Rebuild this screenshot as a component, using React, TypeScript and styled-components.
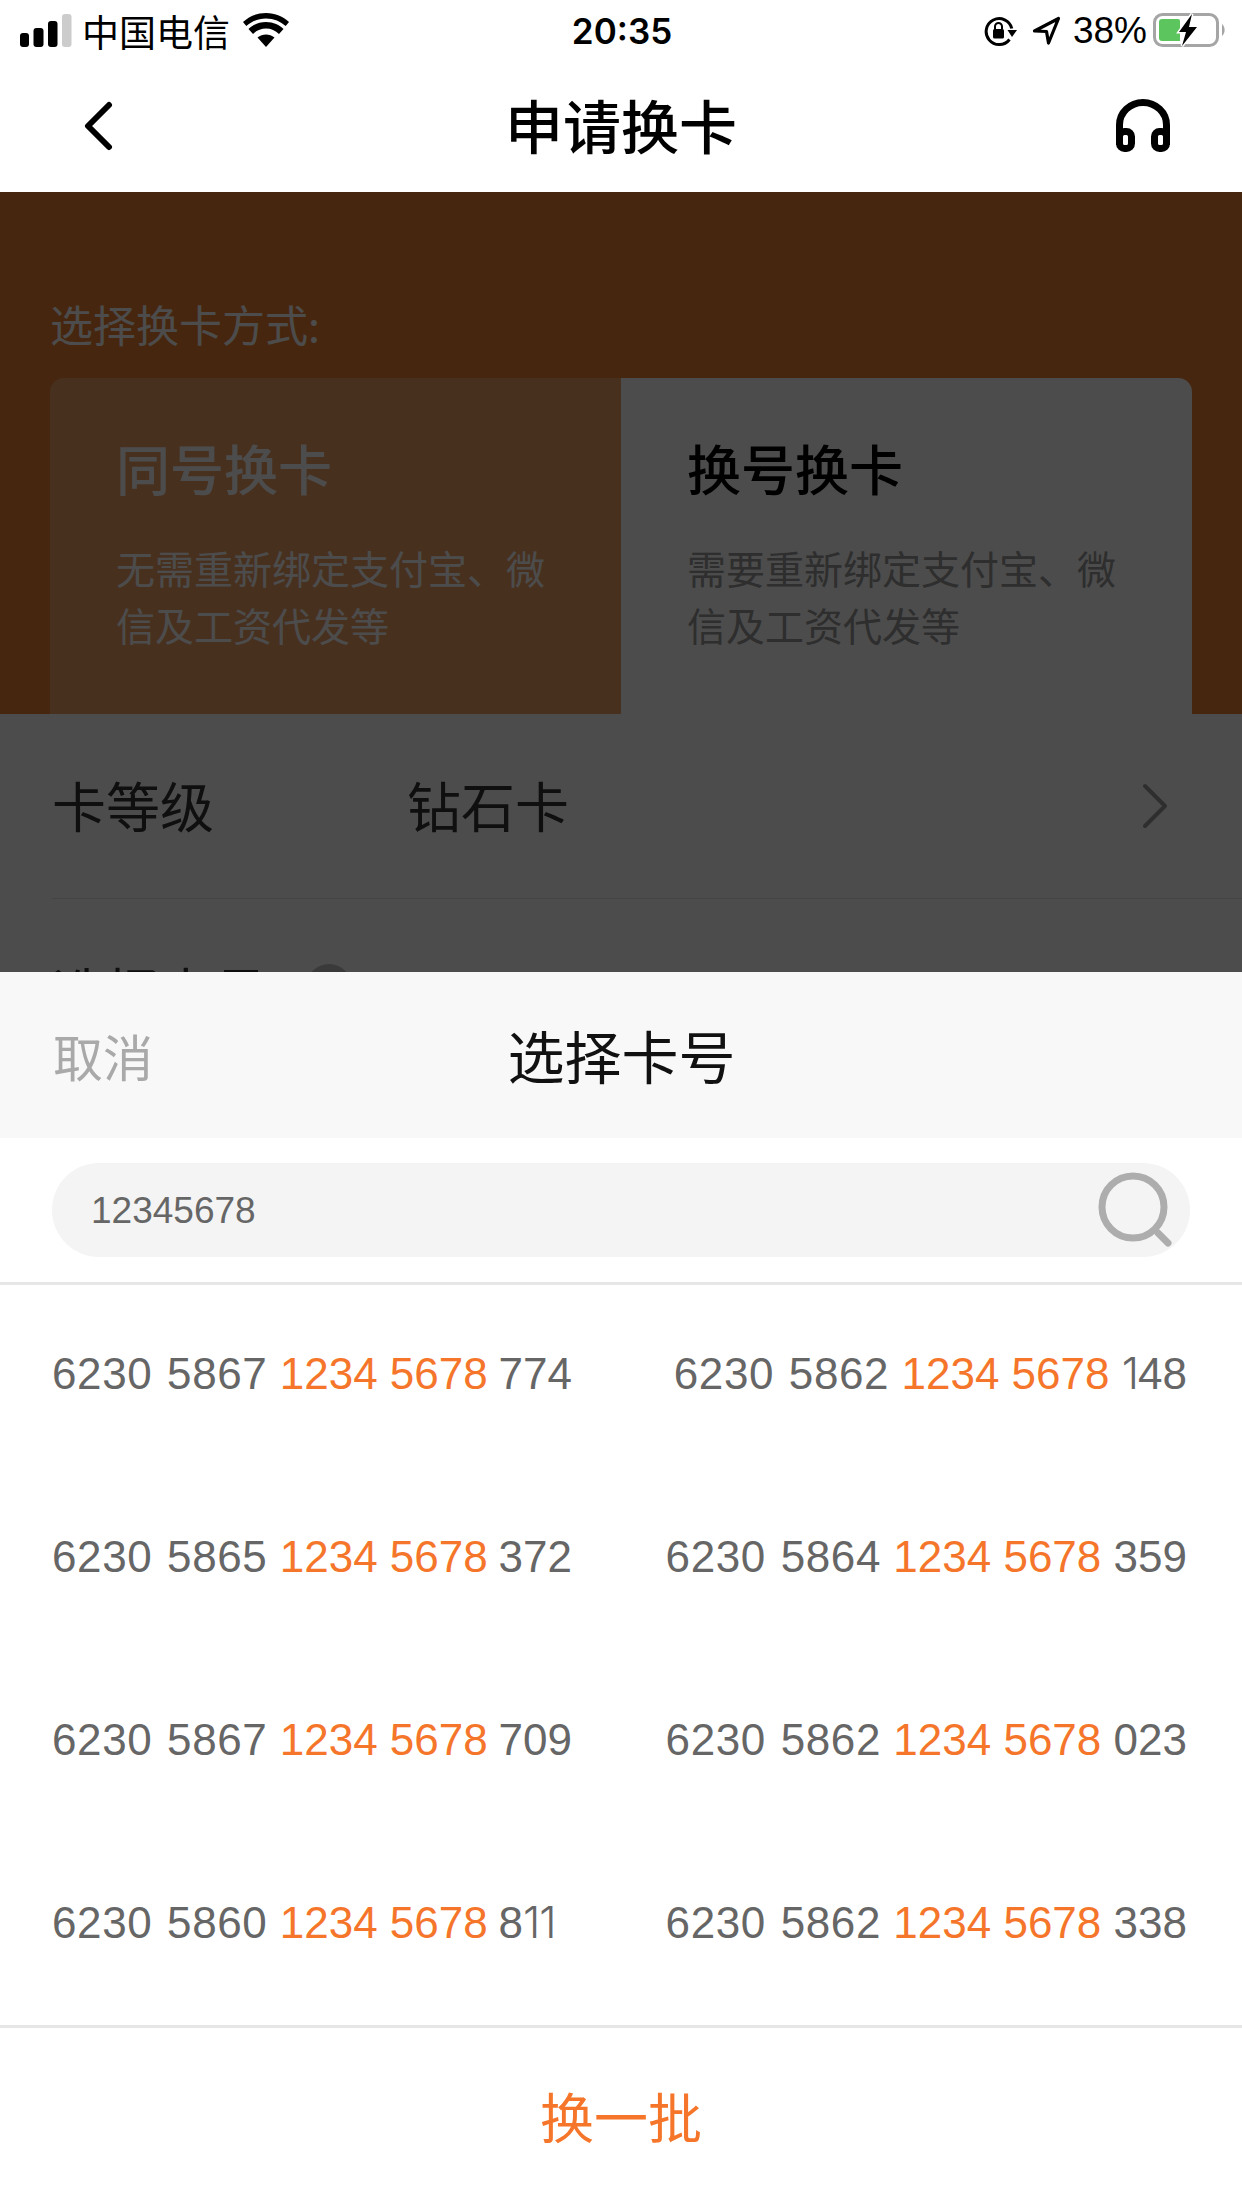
import React from "react";
import styled, { createGlobalStyle } from "styled-components";

const Global = createGlobalStyle`
  html, body { margin: 0; padding: 0; background: #fff; }
  body { font-family: "Liberation Sans", "Noto Sans CJK SC", sans-serif; }
  * { box-sizing: border-box; }
`;

const Page = styled.div`
  position: relative;
  width: 1242px;
  height: 2208px;
  overflow: hidden;
  display: flex;
  flex-direction: column;
  background: #fff;
`;

const StatusBar = styled.div`
  height: 60px;
  padding: 13px 16px 0 20px;
  display: grid;
  grid-template-columns: 1fr auto 1fr;
  align-items: start;
  color: #000;
`;
const StatusLeft = styled.div`
  display: flex;
  align-items: flex-start;
`;
const StatusIcon = styled.svg<{ $ml?: number; $mt?: number }>`
  display: block;
  flex: none;
  margin-left: ${(p) => p.$ml ?? 0}px;
  margin-top: ${(p) => p.$mt ?? 0}px;
`;
const Carrier = styled.span`
  font: 400 37px/36px "Noto Sans CJK SC", sans-serif;
  margin-left: 10px;
`;
const Time = styled.span`
  font: 600 35px/36px Inter, "Liberation Sans", sans-serif;
  margin-left: -2px;
`;
const StatusRight = styled.div`
  display: flex;
  justify-content: flex-end;
  align-items: flex-start;
`;
const Percent = styled.span`
  font: 400 37px/36px "Liberation Sans", sans-serif;
  margin-left: 11px;
`;

const NavBar = styled.div`
  height: 132px;
  padding: 0 72px;
  display: grid;
  grid-template-columns: 1fr auto 1fr;
  align-items: center;
  background: #fff;
`;
const BackIcon = styled.svg`
  margin-left: 11px;
`;
const NavTitle = styled.div`
  font: 500 58px/80px "Noto Sans CJK SC", sans-serif;
  color: #000;
  margin-top: -4px;
`;
const NavRight = styled.div`
  display: flex;
  justify-content: flex-end;
`;

const Body = styled.div`
  flex: 1;
  background: #fff;
  min-height: 0;
`;
const Hero = styled.div`
  height: 522px;
  padding: 104px 50px 0;
  background: #ed7f35;
  display: flex;
  flex-direction: column;
`;
const HeroLabel = styled.div`
  font: 400 43px/54px "Noto Sans CJK SC", sans-serif;
  color: #fff;
  height: 82px;
`;
const Tabs = styled.div`
  flex: 1;
  display: grid;
  grid-template-columns: 571px 571px;
`;
const Tab = styled.div<{ $active?: boolean }>`
  padding: 55px 50px 0 66px;
  background: ${(p) => (p.$active ? "#fff" : "#f0a067")};
  border-radius: ${(p) => (p.$active ? "0 14px 0 0" : "14px 0 0 0")};
`;
const TabTitle = styled.div<{ $active?: boolean }>`
  font: 500 54px/70px "Noto Sans CJK SC", sans-serif;
  color: ${(p) => (p.$active ? "#000" : "#fff")};
`;
const TabDesc = styled.div<{ $active?: boolean }>`
  margin-top: 36px;
  font: 400 39px/57px "Noto Sans CJK SC", sans-serif;
  color: ${(p) => (p.$active ? "#999" : "#fff")};
`;
const Row = styled.div`
  margin-left: 52px;
  height: 185px;
  display: flex;
  align-items: center;
  border-bottom: 1px solid #e4e4e4;
  font: 400 54px/60px "Noto Sans CJK SC", sans-serif;
  color: #333;
`;
const RowLabel = styled.div`
  width: 355px;
  margin-top: -2px;
`;
const RowValue = styled.div`
  flex: 1;
  margin-top: -2px;
`;
const ChevronWrap = styled.div`
  margin-right: 74px;
  display: flex;
`;
const HelpDot = styled.div`
  width: 46px;
  height: 46px;
  border-radius: 50%;
  background: #c4c4c4;
  margin: -8px 0 0 38px;
`;

const Scrim = styled.div`
  position: absolute;
  left: 0;
  right: 0;
  top: 192px;
  bottom: 0;
  background: rgba(0, 0, 0, 0.7);
`;
const Sheet = styled.div`
  position: absolute;
  left: 0;
  right: 0;
  bottom: 0;
  height: 1236px;
  background: #fff;
  display: flex;
  flex-direction: column;
`;
const SheetHeader = styled.div`
  height: 166px;
  background: #f8f8f8;
  display: grid;
  grid-template-columns: 1fr auto 1fr;
  align-items: center;
  padding: 0 52px 0 53px;
`;
const Cancel = styled.div`
  font: 400 50px/60px "Noto Sans CJK SC", sans-serif;
  color: #a9a9a9;
`;
const SheetTitle = styled.div`
  font: 400 57px/70px "Noto Sans CJK SC", sans-serif;
  color: #111;
  margin-top: -2px;
`;
const SearchArea = styled.div`
  height: 147px;
  padding: 25px 52px 0;
  border-bottom: 3px solid #e6e6e6;
`;
const SearchPill = styled.div`
  width: 1138px;
  height: 94px;
  border-radius: 47px;
  background: #f4f4f4;
  display: flex;
  align-items: center;
  justify-content: space-between;
  padding: 0 16px 0 39px;
`;
const SearchValue = styled.span`
  font: 400 37px/44px "Liberation Sans", sans-serif;
  color: #666;
  margin-top: 2px;
`;
const SearchIcon = styled.svg`
  filter: blur(0.6px);
`;
const NumberGrid = styled.div`
  flex: 1;
  display: grid;
  grid-template-columns: 1fr 1fr;
  grid-auto-rows: 183px;
  padding: 0 55px 0 52px;
  align-content: start;
  margin-top: -3px;
`;
const NumberCell = styled.div<{ $right?: boolean }>`
  font: 400 44px/183px "Liberation Sans", sans-serif;
  color: #666;
  white-space: pre;
  text-align: ${(p) => (p.$right ? "right" : "left")};
`;
const Prefix = styled.span`
  letter-spacing: 0.6px;
  word-spacing: 2px;
  margin-right: -2.5px;
`;
const Suffix = styled.span<{ $right?: boolean }>`
  margin-left: ${(p) => (p.$right ? "0" : "-1.5px")};
`;
const NarrowOne = styled.span`
  font-family: Inter, "Liberation Sans", sans-serif;
  font-weight: 300;
  letter-spacing: -1px;
`;
const Hit = styled.span`
  color: #f5762b;
`;
const Footer = styled.div`
  height: 183px;
  border-top: 3px solid #e6e6e6;
  display: flex;
  align-items: center;
  justify-content: center;
  font: 400 54px/70px "Noto Sans CJK SC", sans-serif;
  color: #f5762b;
  padding-bottom: 4px;
`;

type Num = { a: string; b: string };
const rows: [Num, Num][] = [
  [{ a: "6230 5867 ", b: " 774" }, { a: "6230 5862 ", b: " 148" }],
  [{ a: "6230 5865 ", b: " 372" }, { a: "6230 5864 ", b: " 359" }],
  [{ a: "6230 5867 ", b: " 709" }, { a: "6230 5862 ", b: " 023" }],
  [{ a: "6230 5860 ", b: " 811" }, { a: "6230 5862 ", b: " 338" }],
];

const CardNo = ({ n, right }: { n: Num; right?: boolean }) => (
  <NumberCell $right={right}>
    <Prefix>{n.a}</Prefix>
    <Hit>1234 5678</Hit>
    <Suffix $right={right}>
      {n.b.split("").map((c, i) => (c === "1" ? <NarrowOne key={i}>1</NarrowOne> : c))}
    </Suffix>
  </NumberCell>
);

export default function App() {
  return (
    <Page>
      <Global />
      <StatusBar>
        <StatusLeft>
          <StatusIcon width="52" height="33" viewBox="0 0 52 33" $mt={1}>
            <rect x="0" y="19" width="9" height="14" rx="3" fill="#000" />
            <rect x="13.500" y="14" width="10" height="19" rx="3" fill="#000" />
            <rect x="28" y="7" width="9.500" height="26" rx="3" fill="#000" />
            <rect x="42" y="0" width="9.500" height="33" rx="3" fill="#ccc" />
          </StatusIcon>
          <Carrier>中国电信</Carrier>
          <StatusIcon width="46" height="34" viewBox="0 0 46 34" $ml={13}>
            <path d="M23 34 14.500 24.500C19.500 20.500 26.500 20.500 31.500 24.500Z" fill="#000" />
            <path d="M23 9C15.500 9 9.500 12 5.500 16L10 21C13.500 17.500 18 15.500 23 15.500S32.500 17.500 36 21L40.500 16C36.500 12 30.500 9 23 9Z" fill="#000" />
            <path d="M23 0C13.500 0 6 3.500 0 9L3.300 13C8.500 8.500 15 5.500 23 5.500S37.500 8.500 42.700 13L46 9C40 3.500 32.500 0 23 0Z" fill="#000" />
          </StatusIcon>
        </StatusLeft>
        <Time>20:35</Time>
        <StatusRight>
          <StatusIcon width="34" height="30" viewBox="0 0 34 30" $mt={4}>
            <path d="M27.800 11.500A13 13 0 1 0 25.500 22.500" fill="none" stroke="#000" strokeWidth="3" />
            <path d="M23.500 13H33L28 20Z" fill="#000" />
            <rect x="9" y="12" width="11" height="9.500" rx="1.500" fill="#000" />
            <path d="M11 12V9.500a3.500 3.500 0 0 1 7 0V12" fill="none" stroke="#000" strokeWidth="2" />
          </StatusIcon>
          <StatusIcon width="30" height="30" viewBox="0 0 30 30" $ml={14} $mt={3}>
            <path d="M2.500 15 26.500 2.500 16.500 27 14.500 15.500Z" fill="none" stroke="#000" strokeWidth="3.200" strokeLinejoin="round" />
          </StatusIcon>
          <Percent>38%</Percent>
          <StatusIcon width="73" height="34" viewBox="0 0 73 34" $ml={6}>
            <rect x="1.500" y="1.500" width="63" height="31" rx="8" fill="none" stroke="#a5a5a5" strokeWidth="3" />
            <path d="M9 6H25A2 2 0 0 1 27 8V28H9A3 3 0 0 1 6 25V9A3 3 0 0 1 9 6Z" fill="#5cc55e" />
            <path d="M39 1 26 19H33L29 33 44 14H36Z" fill="#000" stroke="#fff" strokeWidth="3" paintOrder="stroke" />
            <path d="M69 11C72.500 14 72.500 20 69 23Z" fill="#a5a5a5" />
          </StatusIcon>
        </StatusRight>
      </StatusBar>
      <NavBar>
        <BackIcon width="30" height="50" viewBox="0 0 30 50">
          <path d="M26 4 5 25 26 46" fill="none" stroke="#000" strokeWidth="6" strokeLinecap="round" strokeLinejoin="round" />
        </BackIcon>
        <NavTitle>申请换卡</NavTitle>
        <NavRight>
          <svg width="54" height="54" viewBox="0 0 54 54">
            <path d="M3.500 46V26A23.500 22.500 0 0 1 50.500 26V46" fill="none" stroke="#000" strokeWidth="7" />
            <rect x="3.500" y="32.500" width="12" height="17" rx="5" fill="none" stroke="#000" strokeWidth="7" />
            <rect x="38.500" y="32.500" width="12" height="17" rx="5" fill="none" stroke="#000" strokeWidth="7" />
          </svg>
        </NavRight>
      </NavBar>
      <Body>
        <Hero>
          <HeroLabel>选择换卡方式:</HeroLabel>
          <Tabs>
            <Tab>
              <TabTitle>同号换卡</TabTitle>
              <TabDesc>无需重新绑定支付宝、微信及工资代发等</TabDesc>
            </Tab>
            <Tab $active>
              <TabTitle $active>换号换卡</TabTitle>
              <TabDesc $active>需要重新绑定支付宝、微信及工资代发等</TabDesc>
            </Tab>
          </Tabs>
        </Hero>
        <Row>
          <RowLabel>卡等级</RowLabel>
          <RowValue>钻石卡</RowValue>
          <ChevronWrap>
            <svg width="26" height="46" viewBox="0 0 26 46">
              <path d="M3 3 23 23 3 43" fill="none" stroke="#999" strokeWidth="4" strokeLinecap="round" strokeLinejoin="round" />
            </svg>
          </ChevronWrap>
        </Row>
        <Row>
          选择卡号
          <HelpDot />
        </Row>
      </Body>
      <Scrim />
      <Sheet>
        <SheetHeader>
          <Cancel>取消</Cancel>
          <SheetTitle>选择卡号</SheetTitle>
          <span />
        </SheetHeader>
        <SearchArea>
          <SearchPill>
            <SearchValue>12345678</SearchValue>
            <SearchIcon width="76" height="76" viewBox="0 0 76 76">
              <circle cx="35" cy="35" r="31" fill="none" stroke="#adadad" strokeWidth="7" />
              <path d="M60 61 70 71" stroke="#adadad" strokeWidth="7" strokeLinecap="round" />
            </SearchIcon>
          </SearchPill>
        </SearchArea>
        <NumberGrid>
          {rows.map((r, i) => (
            <React.Fragment key={i}>
              <CardNo n={r[0]} />
              <CardNo n={r[1]} right />
            </React.Fragment>
          ))}
        </NumberGrid>
        <Footer>换一批</Footer>
      </Sheet>
    </Page>
  );
}
